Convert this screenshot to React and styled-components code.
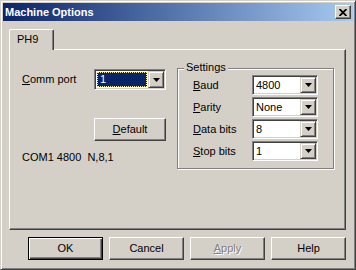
import React from 'react'
import styled, { createGlobalStyle } from 'styled-components'

const GlobalStyle = createGlobalStyle`
  html, body {
    margin: 0;
    padding: 0;
    background: #d4d0c8;
  }
  body {
    font-family: Tahoma, "Liberation Sans", Arial, sans-serif;
    font-size: 11px;
    line-height: 13px;
    color: #000;
  }
`

const Window = styled.div`
  box-sizing: border-box;
  width: 356px;
  height: 270px;
  display: flex;
  flex-direction: column;
  background: #d4d0c8;
  border: 1px solid;
  border-color: #d4d0c8 #404040 #404040 #d4d0c8;
  box-shadow: inset 1px 1px #fff, inset -1px -1px #808080;
  padding: 2px;
`

const TitleBar = styled.div`
  height: 18px;
  display: flex;
  align-items: center;
  padding: 0 2px;
  background: linear-gradient(to right, #0a246a, #a6caf0);
`

const TitleText = styled.div`
  flex: 1;
  color: #fff;
  font-weight: bold;
  font-size: 11px;
`

const CloseButton = styled.div`
  box-sizing: border-box;
  width: 16px;
  height: 14px;
  display: flex;
  align-items: center;
  justify-content: center;
  background: #d4d0c8;
  border: 1px solid;
  border-color: #fff #404040 #404040 #fff;
  box-shadow: inset -1px -1px #808080;
`

const Body = styled.div`
  flex: 1;
  display: flex;
  flex-direction: column;
  padding: 8px 7px 0 6px;
`

const TabStrip = styled.div`
  display: flex;
  height: 20px;
`

const Tab = styled.div`
  position: relative;
  z-index: 1;
  box-sizing: border-box;
  width: 45px;
  height: 21px;
  padding: 3px 0 0 7px;
  background: #d4d0c8;
  border-top: 1px solid #fff;
  border-left: 1px solid #fff;
  border-right: 1px solid #404040;
  border-radius: 2px 2px 0 0;
  box-shadow: inset -1px 0 #808080;
`

const Panel = styled.div`
  box-sizing: border-box;
  height: 181px;
  display: flex;
  align-items: flex-start;
  gap: 11px;
  padding: 19px 0 0 12px;
  border: 1px solid;
  border-color: #fff #404040 #404040 #fff;
  box-shadow: inset -1px -1px #808080;
`

const LeftColumn = styled.div`
  width: 144px;
  display: flex;
  flex-direction: column;
`

const FieldRow = styled.div`
  display: flex;
  align-items: center;
  justify-content: space-between;
`

const Key = styled.span`
  text-decoration: underline;
  text-underline-offset: 1px;
`

const ComboBox = styled.div`
  box-sizing: border-box;
  display: flex;
  width: ${p => p.$w}px;
  height: ${p => p.$h}px;
  padding: 1px;
  background: #fff;
  border: 1px solid;
  border-color: #808080 #fff #fff #808080;
  box-shadow: inset 1px 1px #404040, inset -1px -1px #d4d0c8;
`

const ComboValue = styled.div`
  flex: 1;
  display: flex;
  align-items: center;
  padding-left: 2px;
`

const Highlight = styled.div`
  flex: 1;
  align-self: stretch;
  display: flex;
  align-items: center;
  margin: 1px;
  padding-left: 2px;
  background: #0a246a;
  color: #fff;
  border: 1px dotted #f5f0a0;
`

const DropButton = styled.div`
  box-sizing: border-box;
  width: 16px;
  display: flex;
  align-items: center;
  justify-content: center;
  background: #d4d0c8;
  border: 1px solid;
  border-color: #d4d0c8 #404040 #404040 #d4d0c8;
  box-shadow: inset 1px 1px #fff, inset -1px -1px #808080;
`

const Button = styled.button`
  box-sizing: border-box;
  width: ${p => p.$w || 75}px;
  height: 23px;
  padding: 0;
  margin: 0;
  font: inherit;
  color: ${p => (p.disabled ? '#808080' : '#000')};
  text-shadow: ${p => (p.disabled ? '1px 1px #fff' : 'none')};
  background: #d4d0c8;
  border: 1px solid;
  border-color: ${p => (p.$default ? '#000' : '#fff #404040 #404040 #fff')};
  box-shadow: ${p =>
    p.$default
      ? 'inset 1px 1px #fff, inset -1px -1px #404040, inset -2px -2px #808080'
      : 'inset -1px -1px #808080'};
`

const DefaultButton = styled(Button)`
  align-self: flex-end;
  margin-top: 28px;
`

const Status = styled.div`
  margin-top: 10px;
  white-space: pre;
`

const Group = styled.div`
  box-sizing: border-box;
  width: 157px;
  height: 101px;
  margin-top: -1px;
  display: flex;
  flex-direction: column;
  padding: 0 15px;
  border: 1px solid #808080;
  box-shadow: inset 1px 1px #fff, 1px 1px #fff;
`

const Legend = styled.div`
  align-self: flex-start;
  margin: -8px 0 0 -9px;
  padding: 0 2px;
  background: #d4d0c8;
`

const SettingList = styled.div`
  display: flex;
  flex-direction: column;
  gap: 2px;
  margin-top: 1px;
`

const ButtonRow = styled.div`
  display: flex;
  justify-content: flex-end;
  gap: 6px;
  margin-top: 7px;
`

const Arrow = () => (
  <svg width="7" height="4" viewBox="0 0 7 4">
    <polygon points="0,0 7,0 3.5,4" fill="#000" />
  </svg>
)

const CloseGlyph = () => (
  <svg width="8" height="7" viewBox="0 0 8 7">
    <path d="M0.5 0 L7.5 7 M7.5 0 L0.5 7" stroke="#000" strokeWidth="1.8" />
  </svg>
)

const Combo = ({ value, w, h = 20, selected }) => (
  <ComboBox $w={w} $h={h}>
    {selected ? <Highlight>{value}</Highlight> : <ComboValue>{value}</ComboValue>}
    <DropButton>
      <Arrow />
    </DropButton>
  </ComboBox>
)

const settings = [
  { key: 'B', rest: 'aud', value: '4800' },
  { key: 'P', rest: 'arity', value: 'None' },
  { key: 'D', rest: 'ata bits', value: '8' },
  { key: 'S', rest: 'top bits', value: '1' },
]

export default function App() {
  return (
    <Window>
      <GlobalStyle />
      <TitleBar>
        <TitleText>Machine Options</TitleText>
        <CloseButton>
          <CloseGlyph />
        </CloseButton>
      </TitleBar>
      <Body>
        <TabStrip>
          <Tab>PH9</Tab>
        </TabStrip>
        <Panel>
          <LeftColumn>
            <FieldRow>
              <span>
                <Key>C</Key>omm port
              </span>
              <Combo value="1" w={72} h={21} selected />
            </FieldRow>
            <DefaultButton $w={72}>
              <Key>D</Key>efault
            </DefaultButton>
            <Status>COM1 4800  N,8,1</Status>
          </LeftColumn>
          <Group>
            <Legend>Settings</Legend>
            <SettingList>
              {settings.map(s => (
                <FieldRow key={s.key}>
                  <span>
                    <Key>{s.key}</Key>
                    {s.rest}
                  </span>
                  <Combo value={s.value} w={66} />
                </FieldRow>
              ))}
            </SettingList>
          </Group>
        </Panel>
        <ButtonRow>
          <Button $default>OK</Button>
          <Button>Cancel</Button>
          <Button disabled>
            <Key>A</Key>pply
          </Button>
          <Button>Help</Button>
        </ButtonRow>
      </Body>
    </Window>
  )
}
